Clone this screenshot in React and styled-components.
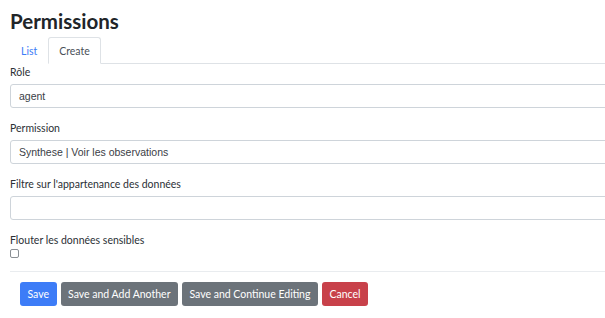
import React from "react";
import styled, { createGlobalStyle } from "styled-components";

const GlobalStyle = createGlobalStyle`
  body {
    margin: 0;
    overflow: hidden;
    background: #fff;
    font-family: "Lato", "Open Sans", sans-serif;
    color: #212529;
  }
`;

const Page = styled.div`
  width: 595px;
  padding: 0 0 0 10px;
  overflow: hidden;
`;

const Wide = styled.div`
  width: 640px;
`;

const Title = styled.h1`
  margin: 0;
  padding-top: 8px;
  font-size: 20.5px;
  line-height: 26px;
  font-weight: 700;
  color: #212529;
`;

const Tabs = styled.ul`
  display: flex;
  list-style: none;
  margin: 3px 0 0;
  padding: 0;
  border-bottom: 1px solid #dee2e6;
`;

const Tab = styled.li`
  margin-bottom: -1px;
  padding: 0 10px;
  height: 25px;
  display: flex;
  align-items: center;
  font-size: 10.5px;
  border: 1px solid ${(p) => (p.$active ? "#dee2e6" : "transparent")};
  border-bottom-color: ${(p) => (p.$active ? "#fff" : "transparent")};
  border-radius: 3px 3px 0 0;
  color: ${(p) => (p.$active ? "#495057" : "#3d7cf7")};
  background: #fff;
`;

const Group = styled.div`
  display: flex;
  flex-direction: column;
  margin-top: ${(p) => p.$top ?? 12}px;
`;

const Label = styled.label`
  font-size: 10.5px;
  line-height: 16px;
  color: #2b3035;
  margin-bottom: 4px;
`;

const Input = styled.div`
  height: 24px;
  box-sizing: border-box;
  border: 1px solid #ced4da;
  border-radius: 3px;
  padding: 0 8px;
  display: flex;
  align-items: center;
  font-family: "Liberation Sans", Arial, sans-serif;
  font-size: 10.5px;
  color: #3a4046;
`;

const Check = styled.span`
  display: block;
  width: 7px;
  height: 7px;
  border: 1px solid #8a8f94;
  border-radius: 2px;
  margin-top: -3px;
`;

const Divider = styled.hr`
  margin: 13px 0 0;
  border: 0;
  border-top: 1px solid #e9ecef;
`;

const Actions = styled.div`
  display: flex;
  gap: 4px;
  padding: 10px 0 0 10px;
`;

const Button = styled.button`
  height: 24px;
  padding: 0 7.5px;
  border: 0;
  border-radius: 3px;
  font-family: "Lato", "Open Sans", sans-serif;
  font-size: 10.5px;
  color: #fff;
  background: ${(p) =>
    p.$variant === "primary"
      ? "#3d7cf7"
      : p.$variant === "danger"
      ? "#c8414a"
      : "#6c737a"};
`;

export default function App() {
  return (
    <Page>
      <GlobalStyle />
      <Wide>
        <Title>Permissions</Title>
        <Tabs>
          <Tab>List</Tab>
          <Tab $active>Create</Tab>
        </Tabs>
        <Group $top={0}>
          <Label>Rôle</Label>
          <Input>agent</Input>
        </Group>
        <Group>
          <Label>Permission</Label>
          <Input>Synthese | Voir les observations</Input>
        </Group>
        <Group>
          <Label>Filtre sur l'appartenance des données</Label>
          <Input />
        </Group>
        <Group>
          <Label>Flouter les données sensibles</Label>
          <Check />
        </Group>
        <Divider />
        <Actions>
          <Button $variant="primary">Save</Button>
          <Button>Save and Add Another</Button>
          <Button>Save and Continue Editing</Button>
          <Button $variant="danger">Cancel</Button>
        </Actions>
      </Wide>
    </Page>
  );
}
